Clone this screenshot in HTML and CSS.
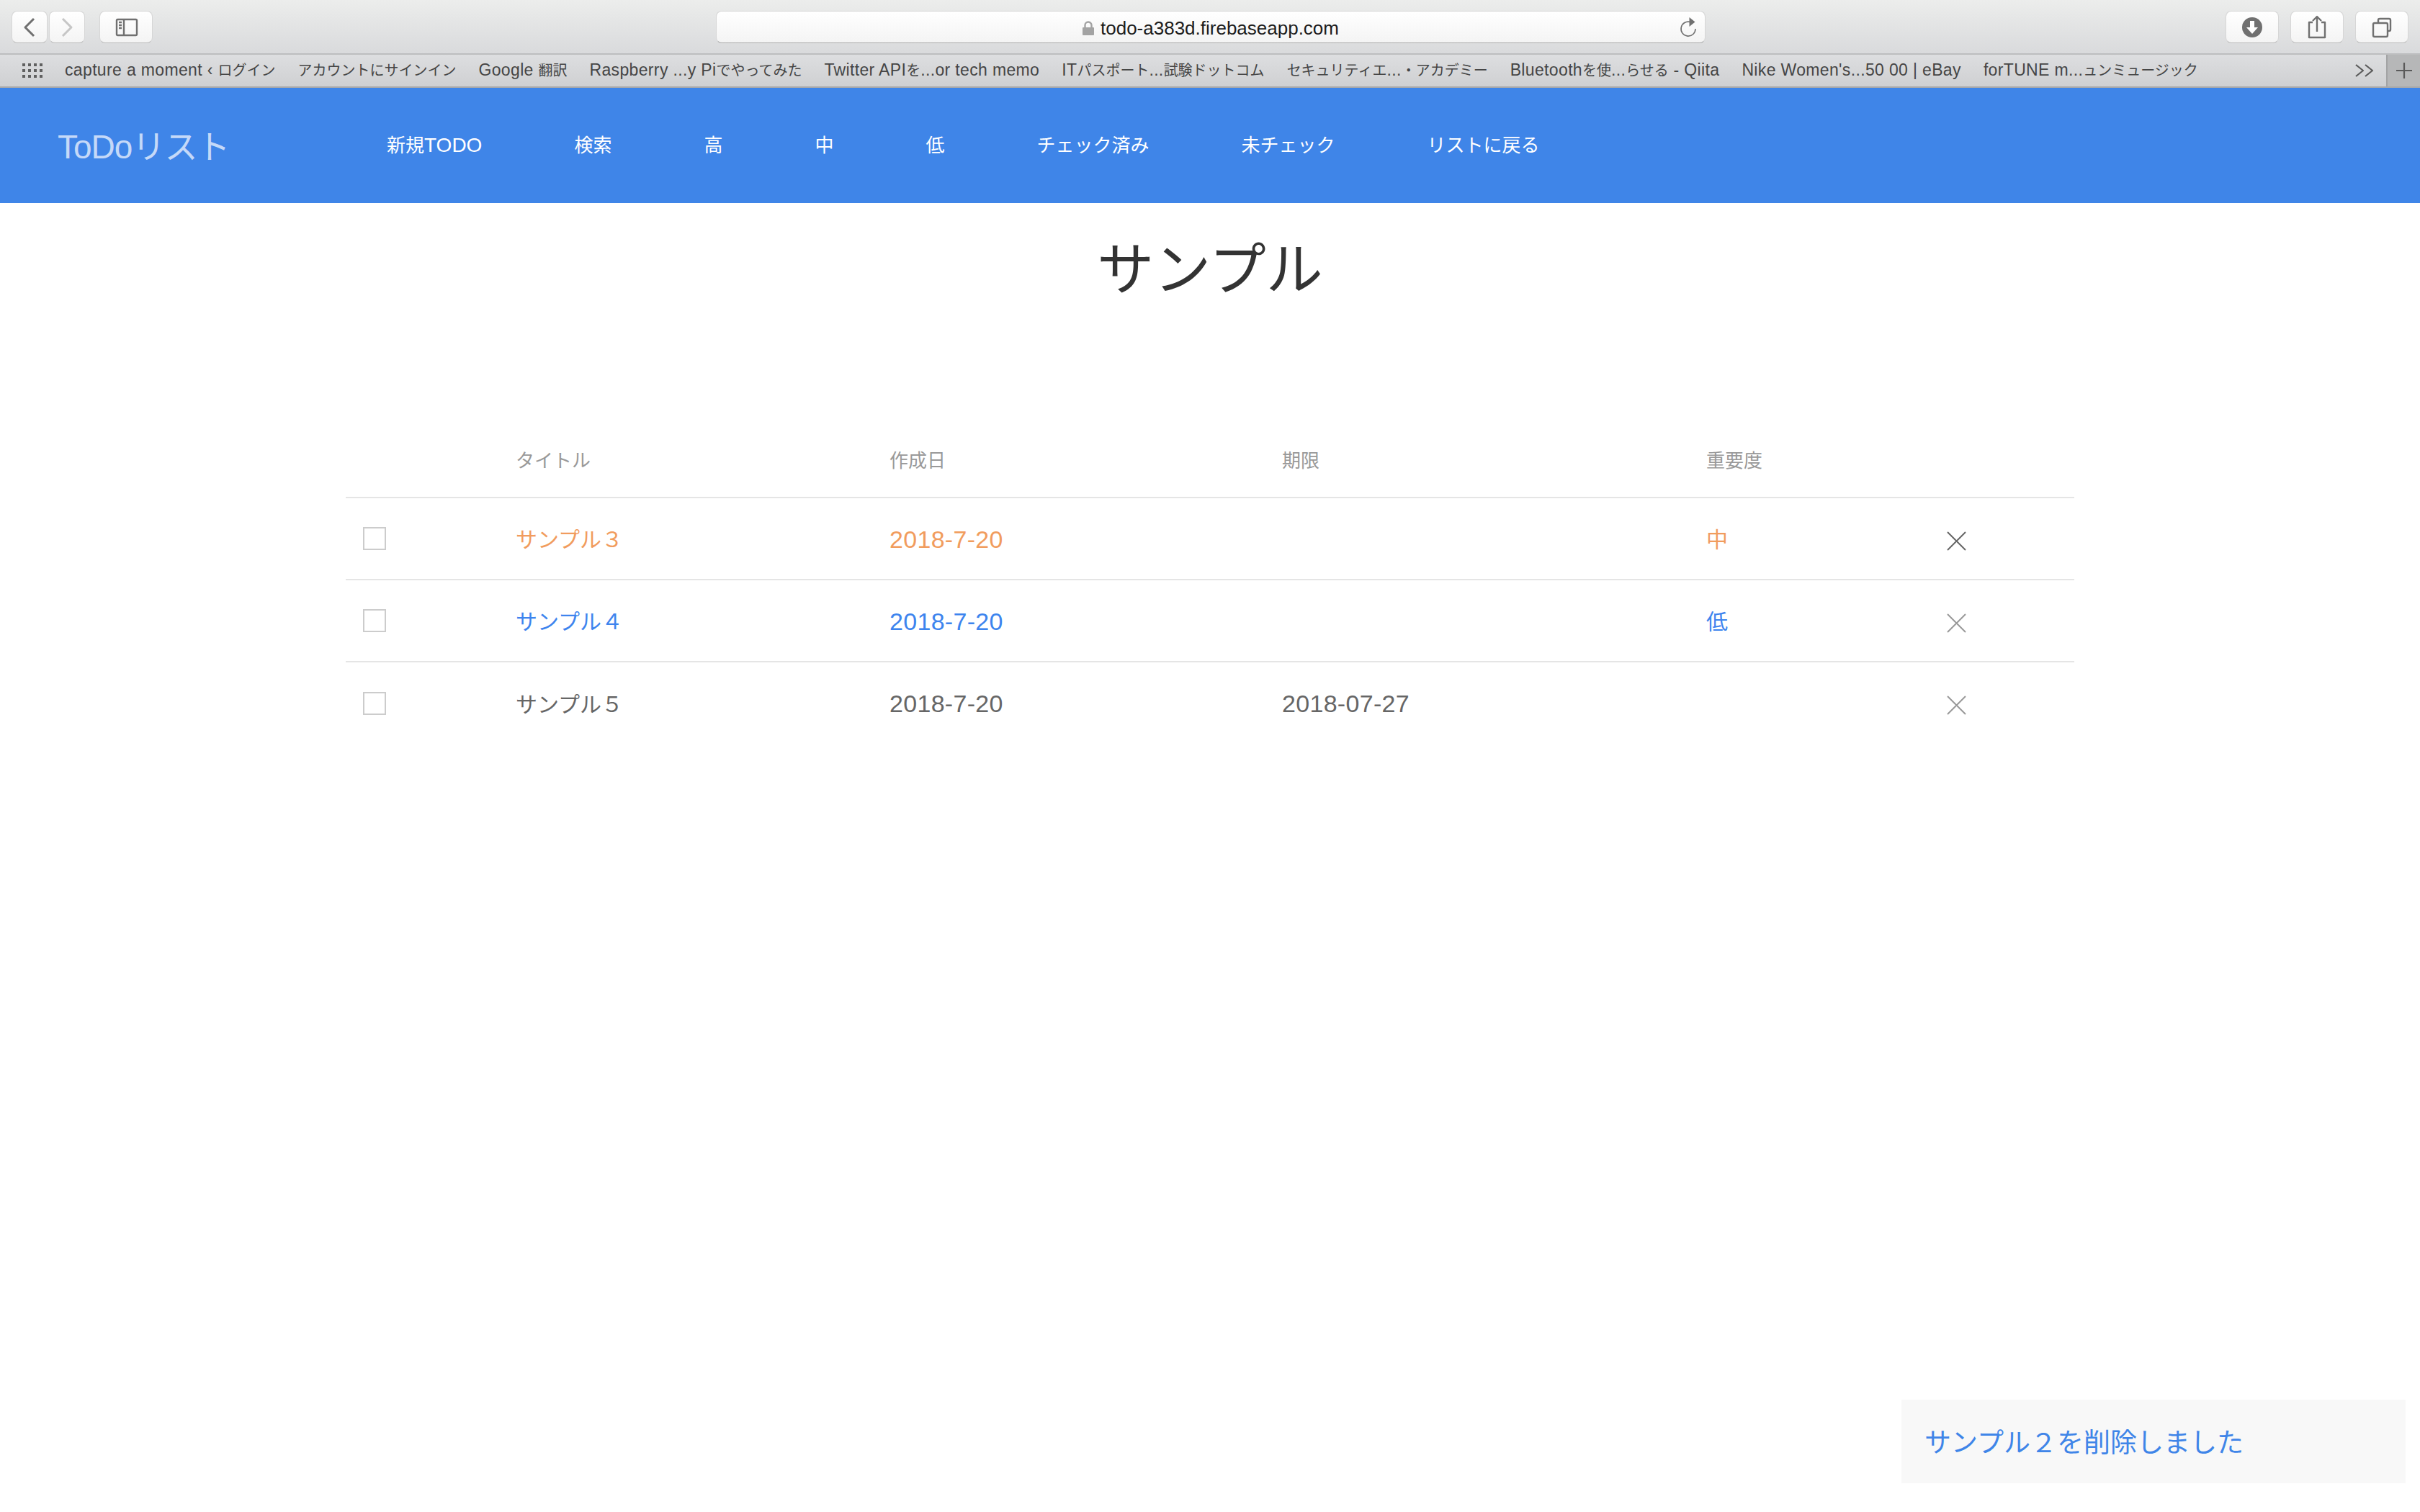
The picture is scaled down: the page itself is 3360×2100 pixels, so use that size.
FILE: index.html
```html
<!DOCTYPE html>
<html lang="ja">
<head>
<meta charset="utf-8">
<title>ToDoリスト</title>
<link rel="stylesheet" href="styles.css">
</head>
<body>
<header class="toolbar">
  <div class="nav-btns">
    <button class="btn btn-nav"><svg viewBox="0 0 50 45" class="ico50"><path d="M31 11 19 23l12 12" class="s s-dark"/></svg></button>
    <button class="btn btn-nav"><svg viewBox="0 0 50 45" class="ico50"><path d="M19 11l12 12-12 12" class="s s-light"/></svg></button>
  </div>
  <button class="btn btn-wide side-btn"><svg viewBox="0 0 74 45" class="ico74"><rect x="24" y="12" width="28" height="22" rx="1.5" class="s s-thin"/><path d="M34 12v22M27 16h4M27 20h4M27 24h4" class="s s-thin"/></svg></button>
  <div class="address">
    <svg viewBox="0 0 16 20" class="lock"><path d="M3.500 9V6a4.500 4.500 0 0 1 9 0v3" class="s s-lock"/><rect x="0" y="9" width="16" height="11" rx="1" fill="#a3a3a3"/></svg>
    <span class="url">todo-a383d.firebaseapp.com</span>
    <svg viewBox="0 0 24 28" class="reload"><path d="M15 6.600A10 10 0 1 0 22 16" class="s s-reload"/><path d="M13.500 0v13l8-6.500z" fill="#707070"/></svg>
  </div>
  <div class="right-btns">
    <button class="btn btn-wide"><svg viewBox="0 0 74 45" class="ico74"><circle cx="37" cy="23" r="14" fill="#707070"/><path d="M34 14h6v9h5l-8 9-8-9h5z" fill="#fff"/></svg></button>
    <button class="btn btn-wide"><svg viewBox="0 0 74 45" class="ico74"><path d="M31 16h-5v21h22V16h-5M37 29V9M31 14l6-6 6 6" class="s s-thin"/></svg></button>
    <button class="btn btn-wide"><svg viewBox="0 0 74 45" class="ico74"><rect x="25" y="17" width="20" height="19" rx="2" class="s s-thin"/><path d="M32 17v-4a2 2 0 0 1 2-2h13a2 2 0 0 1 2 2v13a2 2 0 0 1-2 2h-2" class="s s-thin"/></svg></button>
  </div>
</header>
<div class="bookmarks">
  <svg viewBox="0 0 28 20" class="apps"><path d="M0 0h4v4H0zM8 0h4v4H8zM16 0h4v4h-4zM24 0h4v4h-4zM0 8h4v4H0zM8 8h4v4H8zM16 8h4v4h-4zM24 8h4v4h-4zM0 16h4v4H0zM8 16h4v4H8zM16 16h4v4h-4zM24 16h4v4h-4z" fill="#606060"/></svg>
  <ul class="bm-list">
    <li>capture a moment ‹ <span class="ja">ログイン</span></li>
    <li><span class="ja">アカウントにサインイン</span></li>
    <li>Google <span class="ja">翻訳</span></li>
    <li>Raspberry ...y Pi<span class="ja">でやってみた</span></li>
    <li>Twitter API<span class="ja">を</span>...or tech memo</li>
    <li>IT<span class="ja">パスポート</span>...<span class="ja">試験ドットコム</span></li>
    <li><span class="ja">セキュリティエ</span>...<span class="ja">・アカデミー</span></li>
    <li>Bluetooth<span class="ja">を使</span>...<span class="ja">らせる</span> - Qiita</li>
    <li>Nike Women's...50 00 | eBay</li>
    <li>forTUNE m...<span class="ja">ュンミュージック</span></li>
  </ul>
  <svg viewBox="0 0 26 18" class="more"><path d="M1 1l10 8-10 8M14 1l10 8-10 8" class="s s-more"/></svg>
  <div class="plus"><svg viewBox="0 0 22 22" class="plus-ico"><path d="M11 0v22M0 11h22" class="s s-more"/></svg></div>
</div>
<nav class="appnav">
  <a class="brand">ToDoリスト</a>
  <ul class="menu">
    <li>新規<span class="latin">TODO</span></li>
    <li>検索</li>
    <li>高</li>
    <li>中</li>
    <li>低</li>
    <li>チェック済み</li>
    <li>未チェック</li>
    <li>リストに戻る</li>
  </ul>
</nav>
<main class="content">
  <h1 class="title">サンプル</h1>
  <table class="todo">
    <colgroup><col class="c1"><col class="c2"><col class="c3"><col class="c4"><col class="c5"><col class="c6"></colgroup>
    <thead>
      <tr><th></th><th>タイトル</th><th>作成日</th><th>期限</th><th>重要度</th><th></th></tr>
    </thead>
    <tbody>
      <tr class="mid">
        <td><span class="check"></span></td><td class="name">サンプル３</td><td class="date">2018-7-20</td><td class="date"></td><td class="name">中</td>
        <td><svg viewBox="0 0 27 27" class="x x-dark"><path d="M1 1l25 25M26 1 1 26"/></svg></td>
      </tr>
      <tr class="low">
        <td><span class="check"></span></td><td class="name">サンプル４</td><td class="date">2018-7-20</td><td class="date"></td><td class="name">低</td>
        <td><svg viewBox="0 0 27 27" class="x"><path d="M1 1l25 25M26 1 1 26"/></svg></td>
      </tr>
      <tr class="none">
        <td><span class="check"></span></td><td class="name">サンプル５</td><td class="date">2018-7-20</td><td class="date">2018-07-27</td><td class="name"></td>
        <td><svg viewBox="0 0 27 27" class="x"><path d="M1 1l25 25M26 1 1 26"/></svg></td>
      </tr>
    </tbody>
  </table>
</main>
<div class="toast">サンプル２を削除しました</div>
</body>
</html>
```
FILE: styles.css
```css
* { box-sizing: border-box; }
html, body { margin: 0; padding: 0; }
body {
  width: 3360px;
  height: 2100px;
  overflow: hidden;
  background: #fff;
  position: relative;
  font-family: "Liberation Sans", "Noto Sans CJK JP", sans-serif;
}
ul { list-style: none; margin: 0; padding: 0; }

.toolbar {
  height: 76px;
  padding: 15px 16px 0;
  display: flex;
  align-items: flex-start;
  background: linear-gradient(#ecedec, #d9dadc);
  border-bottom: 2px solid #bdbebf;
}
.btn {
  height: 45px;
  padding: 0;
  display: block;
  background: linear-gradient(#ffffff, #f4f4f4);
  border: 1px solid #d6d6d6;
  border-bottom-color: #b9b9b9;
  border-radius: 8px;
}
.btn svg { display: block; margin: -1px; }
.nav-btns { display: flex; gap: 2px; }
.btn-nav { width: 50px; }
.btn-wide { width: 74px; }
.side-btn { margin-left: 20px; }
.ico50 { width: 50px; height: 45px; }
.ico74 { width: 74px; height: 45px; }
.s { fill: none; stroke-linecap: butt; stroke-linejoin: round; }
.s-dark { stroke: #707070; stroke-width: 3; }
.s-light { stroke: #c6c6c6; stroke-width: 3; }
.s-thin { stroke: #707070; stroke-width: 2.4; }
.s-lock { stroke: #a3a3a3; stroke-width: 2.4; }
.s-reload { stroke: #707070; stroke-width: 1.6; }
.s-more { stroke: #5a5a5a; stroke-width: 2.2; }

.address {
  margin-left: 782px;
  width: 1374px;
  height: 45px;
  padding-top: 2px;
  display: flex;
  align-items: center;
  justify-content: center;
  gap: 9px;
  position: relative;
  background: linear-gradient(#ffffff, #f4f4f4);
  border: 1px solid #d6d6d6;
  border-bottom-color: #a9a9a9;
  border-radius: 8px;
}
.lock { width: 16px; height: 20px; }
.url { font-size: 26px; line-height: 30px; color: #1c1c1c; }
.reload { position: absolute; right: 11px; top: 8px; width: 24px; height: 28px; }
.right-btns { margin-left: 722px; display: flex; gap: 16px; }

.bookmarks {
  height: 46px;
  display: flex;
  align-items: center;
  background: linear-gradient(#dddee0, #cfd0d2);
  border-bottom: 2px solid #a9a9a9;
}
.apps { width: 28px; height: 20px; margin-left: 31px; flex: none; }
.bm-list {
  display: flex;
  align-items: baseline;
  gap: 31px;
  margin-left: 31px;
  flex: 1;
  font-size: 23px;
  line-height: 28px;
  letter-spacing: 0.35px;
  margin-top: -2px;
  color: #454545;
  white-space: nowrap;
}
.ja { font-size: 20px; letter-spacing: 0; }
.more { width: 26px; height: 18px; margin-right: 17px; flex: none; }
.plus {
  width: 47px;
  height: 44px;
  flex: none;
  display: flex;
  align-items: center;
  justify-content: center;
  background: #b6b7b8;
  border-left: 2px solid #a2a3a4;
}
.plus-ico { width: 22px; height: 22px; }

.appnav {
  height: 160px;
  display: flex;
  align-items: center;
  background: #3f85e8;
}
.brand {
  margin-left: 80px;
  width: 393px;
  font-size: 46px;
  color: #c5d9f8;
  letter-spacing: -1px;
  margin-top: -4px;
}
.menu { display: flex; align-items: baseline; color: #fff; font-size: 26px; line-height: 36px; }
.menu li { padding: 0 64px; }
.latin { font-size: 28px; }

.content { display: block; }
.title {
  margin: 0;
  height: 176px;
  padding-top: 6px;
  line-height: 176px;
  text-align: center;
  font-size: 79px;
  font-weight: 400;
  color: #333;
}
.todo {
  margin: 127px 0 0 480px;
  width: 2400px;
  table-layout: fixed;
  border-collapse: collapse;
}
.c1 { width: 236px; }
.c2 { width: 519px; }
.c3 { width: 545px; }
.c4 { width: 589px; }
.c5 { width: 334px; }
.c6 { width: 177px; }
.todo th {
  height: 106px;
  padding: 0 0 1px;
  text-align: left;
  font-size: 26px;
  font-weight: 400;
  color: #999;
  border-bottom: 2px solid #e5e5e5;
}
.todo td {
  height: 114px;
  padding: 0;
  vertical-align: middle;
  color: #666;
  border-bottom: 2px solid #e5e5e5;
}
.todo tbody tr:last-child td { border-bottom: none; }
.todo .name { font-size: 30px; padding-bottom: 2px; }
.todo .date { font-size: 34px; letter-spacing: 0.3px; padding-top: 2px; }
.mid td { color: #f19c5d; }
.low td { color: #3d84ee; }
.none td { color: #666; }
.check {
  display: block;
  width: 32px;
  height: 32px;
  margin-left: 24px;
  border: 2px solid #ccc;
}
.x { display: block; width: 27px; height: 27px; margin: 6px 0 0 0; fill: none; stroke: #999; stroke-width: 2; }
.x-dark { stroke: #666; }

.toast {
  position: absolute;
  right: 20px;
  bottom: 40px;
  width: 700px;
  height: 116px;
  padding: 0 32px 3px;
  display: flex;
  align-items: center;
  background: #f8f8f8;
  color: #3f85e8;
  font-size: 37px;
}
```
